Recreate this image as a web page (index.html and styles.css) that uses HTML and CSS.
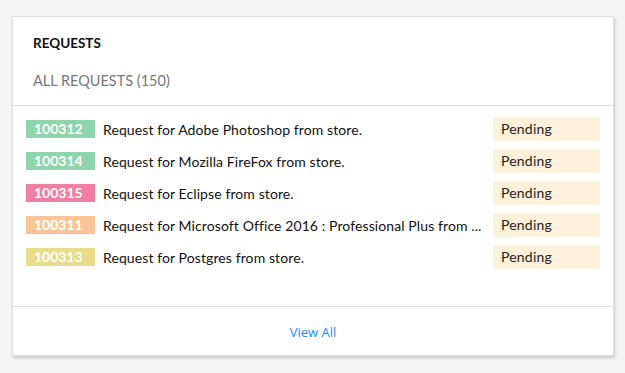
FILE: index.html
```html
<!DOCTYPE html>
<html lang="en">
<head>
    <meta charset="UTF-8">
    <meta name="viewport" content="width=device-width, initial-scale=1.0">
    <title>Requests</title>
    <link rel="stylesheet" href="styles.css">
</head>
<body>

<div class="card">
    <!-- Header -->
    <div class="card-header">
        <h3>REQUESTS</h3>
        <p class="subtitle">ALL REQUESTS (150)</p>
    </div>

    <!-- Request list -->
    <ul class="request-list">
        <li class="request">
            <span class="req-id green">100312</span>
            <span class="req-title">Request for Adobe Photoshop from store.</span>
            <span class="req-status">Pending</span>
        </li>
        <li class="request">
            <span class="req-id green">100314</span>
            <span class="req-title">Request for Mozilla FireFox from store.</span>
            <span class="req-status">Pending</span>
        </li>
        <li class="request">
            <span class="req-id pink">100315</span>
            <span class="req-title">Request for Eclipse from store.</span>
            <span class="req-status">Pending</span>
        </li>
        <li class="request">
            <span class="req-id orange">100311</span>
            <span class="req-title">Request for Microsoft Office 2016 : Professional Plus from ...</span>
            <span class="req-status">Pending</span>
        </li>
        <li class="request">
            <span class="req-id yellow">100313</span>
            <span class="req-title">Request for Postgres from store.</span>
            <span class="req-status">Pending</span>
        </li>
    </ul>

    <!-- Footer -->
    <div class="card-footer">
        <a href="#" class="view-all">View All</a>
    </div>
</div>

</body>
</html>
```

FILE: styles.css
```css
/* Page */
body {
    margin: 0;
    padding: 16px 11px 18px 12px;
    background-color: #f4f4f4;
    font-family: Lato, 'Open Sans', sans-serif;
    color: #111;
}

/* Card */
.card {
    background-color: #fff;
    border: 1px solid #dedede;
    box-shadow: 1px 2px 3px rgba(0, 0, 0, 0.18);
}

.card-header {
    padding: 18px 20px 0;
    border-bottom: 1px solid #e0e0e0;
}

.card-header h3 {
    margin: 0;
    font-size: 13.5px;
    font-weight: 700;
    color: #111;
    line-height: 16px;
}

.subtitle {
    margin: 0;
    padding: 22px 0 16px;
    font-size: 14.5px;
    color: #777;
    line-height: 16px;
}

/* Request rows */
.request-list {
    list-style: none;
    margin: 0;
    padding: 11px 13px 37px;
    display: flex;
    flex-direction: column;
    gap: 8px;
    border-bottom: 1px solid #e0e0e0;
}

.request {
    display: flex;
    align-items: center;
    height: 24px;
}

.req-id {
    flex: none;
    width: 61px;
    height: 18px;
    padding-left: 8px;
    color: #fff;
    font-size: 14px;
    font-weight: 700;
    line-height: 18px;
}

.green { background-color: #8ed5ae; }
.pink { background-color: #f27ea3; }
.orange { background-color: #fac596; }
.yellow { background-color: #e8dc88; }

.req-title {
    flex: 1;
    min-width: 0;
    margin: 0 6px 0 8px;
    font-size: 14px;
    letter-spacing: 0.1px;
    white-space: nowrap;
    overflow: hidden;
}

.req-status {
    flex: none;
    width: 99px;
    height: 24px;
    padding-left: 8px;
    background-color: #fdf2d9;
    font-size: 14px;
    letter-spacing: 0.2px;
    line-height: 24px;
    color: #222;
}

/* Footer link */
.card-footer {
    height: 48px;
    display: flex;
    justify-content: center;
    align-items: center;
}

.view-all {
    font-family: 'Open Sans', sans-serif;
    font-size: 13px;
    color: #1a8cff;
    text-decoration: none;
    padding-top: 1px;
}
```
